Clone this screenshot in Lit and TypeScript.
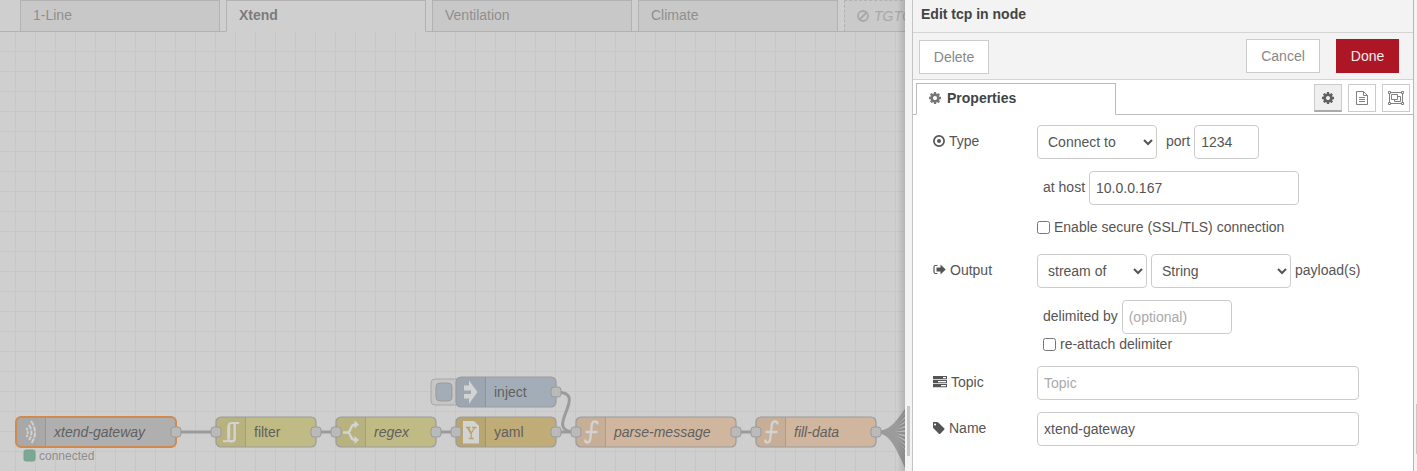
import { LitElement, html, svg, css } from "lit";
import { customElement } from "lit/decorators.js";

const COG =
  "M1152 896q0-106-75-181t-181-75-181 75-75 181 75 181 181 75 181-75 75-181zm512-109v222q0 12-8 23t-20 13l-185 28q-19 54-39 91 35 50 107 138 10 12 10 25t-9 23q-27 37-99 108t-94 71q-12 0-26-9l-138-108q-44 23-91 38-16 136-29 186-7 28-36 28h-222q-14 0-24.5-8.5t-11.5-21.5l-28-184q-49-16-90-37l-141 107q-10 9-25 9-14 0-25-11-126-114-165-168-7-10-7-23 0-12 8-23 15-21 51-66.5t54-70.5q-27-50-41-99l-183-27q-13-2-21-12.5t-8-23.5v-222q0-12 8-23t19-13l186-28q14-46 39-92-40-57-107-138-10-12-10-24 0-10 9-23 26-36 98.5-107.5t94.5-71.5q13 0 26 10l138 107q44-23 91-38 16-136 29-186 7-28 36-28h222q14 0 24.5 8.5t11.5 21.5l28 184q49 16 90 37l142-107q9-9 24-9 13 0 25 10 129 119 165 170 7 8 7 22 0 12-8 23-15 21-51 66.5t-54 70.5q26 50 41 98l183 28q13 2 21 12.5t8 23.5z";
const TAG =
  "M384 448q0-53-37.5-90.5t-90.5-37.5-90.5 37.5-37.5 90.5 37.5 90.5 90.5 37.5 90.5-37.5 37.5-90.5zm1067 576q0 53-37 90l-491 492q-39 37-91 37-53 0-90-37l-715-716q-38-37-64.5-101t-26.5-117v-416q0-52 38-90t90-38h416q53 0 117 26.5t102 64.5l715 714q37 39 37 91z";

const cog = html`<svg width="12" height="12" viewBox="128 128 1536 1536"><path fill="currentColor" d=${COG} /></svg>`;

interface FlowNode {
  x: number;
  y: number;
  w: number;
  label: string;
  fill: string;
  icon: string;
  italic?: boolean;
  selected?: boolean;
  input?: boolean;
}

const NODES: FlowNode[] = [
  { x: 16, y: 417, w: 160, label: "xtend-gateway", fill: "#afafaf", icon: "tcp", italic: true, selected: true },
  { x: 216, y: 417, w: 100, label: "filter", fill: "#c0ba84", icon: "filter", input: true },
  { x: 336, y: 417, w: 100, label: "regex", fill: "#c0ba84", icon: "split", italic: true, input: true },
  { x: 456, y: 417, w: 100, label: "yaml", fill: "#bfac77", icon: "yaml", input: true },
  { x: 456, y: 377, w: 100, label: "inject", fill: "#a3adb8", icon: "inject" },
  { x: 576, y: 417, w: 160, label: "parse-message", fill: "#d0b69e", icon: "fn", italic: true, input: true },
  { x: 756, y: 417, w: 120, label: "fill-data", fill: "#d0b69e", icon: "fn", italic: true, input: true },
];

const ICONS: Record<string, unknown> = {
  tcp: svg`<g fill="none" stroke="#d3d3d3" stroke-width="1.9">
    <path d="M10.500 11q2.500 4.500 0 9" stroke-dasharray="2.500 1"/>
    <path d="M13 8q5 7.500 0 15" stroke-dasharray="4.800 1.200"/>
    <path d="M15 4q8 11.500 0 23" stroke-dasharray="5 1.200"/></g>`,
  filter: svg`<g fill="none" stroke="#d3d3d3"><path d="M7 24.200h3q2.700 0 2.700-2.700V9q0-3 3-3h7.500" stroke-width="2"/><path d="M12.700 8.500v13" stroke-width="3"/><path d="M12.500 24.200h3.500q2.700 0 2.700-2.700V6" stroke-width="2.400"/></g>`,
  split: svg`<g fill="none" stroke="#d3d3d3" stroke-width="2.400"><path d="M7 15.500h6M12 15.500q2-1 3-4.500 1-3.500 5-3.500M12 15.500q2 1 3 4.500 1 3 5 3"/></g>
    <path fill="#d3d3d3" d="M18.500 3.500l4.500 4-4.500 4zM18.500 19l4.500 4-4.500 4z"/>`,
  yaml: svg`<path fill="#d3d3d3" d="M7 4h11l5 5v17.500H7z"/>
    <path d="M10 10.500h4.500M16 10.500h4.500M15.200 16v5.500M12.800 21.500h5M15.300 16l3.500-5.500" fill="none" stroke="#bba56a" stroke-width="1.300"/>
    <path d="M11.800 10.500l3.400 6" stroke="#bba56a" stroke-width="2"/>`,
  inject: svg`<path fill="#d3d3d3" d="M8 8.500h5V3.500l8.500 11.500L13 27v-5.500H8V17h7v-3.500H8z"/>`,
  fn: svg`<path d="M21.500 6.500q-.5-2-2.500-2-2.800 0-3.200 3.500l-1.500 14q-.4 3.500-3.100 3.500-1.700 0-2-2M10.500 15h10" fill="none" stroke="#d3d3d3" stroke-width="2.300" stroke-linecap="round"/>`,
};

@customElement("flow-canvas")
class FlowCanvas extends LitElement {
  static styles = css`
    :host { display: block; flex: 1; min-height: 0; overflow: hidden; }
    svg { display: block; }
    text { font: 14px "Liberation Sans", Arial, sans-serif; fill: #616161; }
    .italic { font-style: italic; }
    .status { font-size: 12px; fill: #8d8d8d; }
    .wire { fill: none; stroke: #9b9b9b; stroke-width: 3; }
    .fan { fill: none; stroke: #9b9b9b; stroke-width: 2.3; }
    .port { fill: #bababa; stroke: #9b9b9b; }
  `;

  node(n: FlowNode) {
    return svg`<g transform="translate(${n.x} ${n.y})">
      <rect width=${n.w} height="30" rx="5" fill=${n.fill}/>
      <path d="M5 0h25v30H5q-5 0-5-5V5q0-5 5-5z" fill="#000" fill-opacity=".04"/>
      <path d="M29.500 0v30" stroke="#000" stroke-opacity=".1"/>
      ${ICONS[n.icon]}
      <rect width=${n.w} height="30" rx="5" fill="none" stroke=${n.selected ? "#d08a50" : "#9b9b9b"} stroke-width=${n.selected ? 2 : 1.2}/>
      <text class=${n.italic ? "italic" : ""} x="38" y="20">${n.label}</text>
      ${n.input ? svg`<rect class="port" x="-5" y="10" width="10" height="10" rx="3"/>` : ""}
      <rect class="port" x=${n.w - 5} y="10" width="10" height="10" rx="3"/>
    </g>`;
  }

  render() {
    const fan = Array.from({ length: 13 }, (_, i) => 404 + i * 6);
    return html`<svg width="905" height="439" viewBox="0 32 905 439">
      <defs><pattern id="grid" x="15" y="31" width="20" height="20" patternUnits="userSpaceOnUse">
        <path d="M.5 0V20M0 .5H20" stroke="#c7c7c7"/></pattern></defs>
      <rect y="32" width="905" height="439" fill="#cfcfcf"/>
      <rect y="32" width="905" height="439" fill="url(#grid)"/>
      ${fan.map((y) => svg`<path class="fan" d="M878 432C893 432 900 ${432 + (y - 432) * 0.55} 910 ${y}"/>`)}
      <path class="wire" d="M176 432H216M316 432H336M436 432H456M556 432H576M736 432H756"/>
      <path class="wire" d="M556 392C592 392 540 432 576 432"/>
      <rect x="431" y="379" width="32" height="26" rx="4" fill="#c6c6c6" stroke="#a8a8a8"/>
      <rect x="436" y="383" width="16" height="18" rx="4" fill="#a3adb8" stroke="#9b9b9b"/>
      ${NODES.map((n) => this.node(n))}
      <rect x="24" y="450" width="11" height="11" rx="2" fill="#7ba894" stroke="#7ba08f"/>
      <text class="status" x="39" y="460">connected</text>
    </svg>`;
  }
}

@customElement("workspace-tabs")
class WorkspaceTabs extends LitElement {
  static styles = css`
    :host { display: flex; gap: 6px; height: 32px; flex: none; overflow: hidden; padding-left: 20px;
      box-sizing: border-box; background: linear-gradient(#b2b2b2, #b2b2b2) 0 31px / 100% 1px no-repeat #cfcfcf; }
    .tab { box-sizing: border-box; flex: 0 0 200px; height: 32px; padding-left: 12px; border: 1px solid #b2b2b2;
      background: #c8c8c8; color: #8f8f8f; font-size: 14px; line-height: 29px; }
    .active { background: #cfcfcf; border-bottom-color: #cfcfcf; color: #7c7c7c; font-weight: bold; }
    .disabled { display: flex; align-items: center; gap: 5px; border-style: dashed; border-bottom-style: solid;
      color: #a8a8a8; font-style: italic; background: #cacaca; }
  `;
  render() {
    return html`<div class="tab">1-Line</div>
      <div class="tab active">Xtend</div>
      <div class="tab">Ventilation</div>
      <div class="tab">Climate</div>
      <div class="tab disabled">
        <svg width="12" height="12" viewBox="0 0 12 12" fill="none" stroke="currentColor" stroke-width="1.800"><circle cx="6" cy="6" r="5"/><path d="M2.500 9.500l7-7"/></svg>
        TGTG
      </div>`;
  }
}

@customElement("edit-tray")
class EditTray extends LitElement {
  static styles = css`
    :host { display: flex; flex-direction: column; box-sizing: border-box; width: 502px; flex: none;
      border-left: 1px solid #c4c4c4; border-right: 1px solid #b8b8b8; background: #fff; color: #555; font-size: 14px; }
    svg { display: block; flex: none; }
    .header { box-sizing: border-box; height: 33px; padding-left: 8px; line-height: 28px; font-weight: bold;
      color: #444; background: #f3f3f3; border-bottom: 1px solid #d4d4d4; }
    .toolbar { box-sizing: border-box; height: 47px; display: flex; align-items: flex-start; padding: 6px 14px 0 6px;
      background: #f3f3f3; border-bottom: 1px solid #d4d4d4; }
    .btn { box-sizing: border-box; height: 34px; border: 1px solid #ccc; background: #fff; color: #888;
      line-height: 32px; text-align: center; }
    .delete { width: 70px; margin: 1px auto 0 0; }
    .cancel { width: 74px; margin-right: 16px; }
    .done { width: 63px; background: #ad1625; border-color: #ad1625; color: #eee; }
    .tabs { box-sizing: border-box; height: 35px; display: flex; padding: 3px 3px 0;
      background: linear-gradient(#bbb, #bbb) 0 34px / 100% 1px no-repeat #fff; }
    .tab { box-sizing: border-box; width: 200px; height: 32px; display: flex; align-items: center; gap: 6px;
      padding: 0 0 2px 12px; margin-right: auto; border: 1px solid #bbb; border-bottom-color: #fff;
      background: #fff; color: #444; font-weight: bold; }
    .tab svg { color: #777; }
    .tool { box-sizing: border-box; width: 28px; height: 28px; margin: 1px 0 0 6px; border: 1px solid #ccc;
      display: grid; place-items: center; color: #808080; }
    .on { background: #efefef; border-bottom: 2px solid #aaa; color: #606060; }
    .form { padding: 10px 0 0 20px; display: flex; flex-direction: column; }
    .row { display: flex; align-items: center; height: 34px; margin-bottom: 12px; }
    .label { display: flex; align-items: center; gap: 4px; width: 104px; height: 16px; padding-bottom: 2px; flex: none; }
    .text { padding-bottom: 2px; line-height: 16px; white-space: nowrap; }
    .port-text { margin: 0 4px 0 9px; }
    .lead { margin: 0 4px 0 110px; }
    .after { margin-left: 4px; }
    .check { display: flex; align-items: center; height: 17px; margin-left: 104px; }
    .check input { width: 13px; height: 13px; margin: 0 4px 0 0; }
    .secure { margin: 2px 0 18px 104px; }
    .reattach { margin: -10px 0 13px 110px; }
    .box { box-sizing: border-box; height: 34px; border: 1px solid #ccc; border-radius: 4px; background: #fff;
      color: #555; font: 14px "Liberation Sans", Arial, sans-serif; padding: 0 6px 1px; margin: 0; }
    .box::placeholder { color: #aaa; opacity: 1; }
    .w65 { width: 65px; } .w110 { width: 110px; } .w120 { width: 120px; } .w140 { width: 140px; }
    .w210 { width: 210px; } .w322 { width: 322px; }
    .second { margin-left: 4px; }
  `;
  render() {
    return html`
      <div class="header">Edit tcp in node</div>
      <div class="toolbar">
        <div class="btn delete">Delete</div>
        <div class="btn cancel">Cancel</div>
        <div class="btn done">Done</div>
      </div>
      <div class="tabs">
        <div class="tab">${cog}Properties</div>
        <div class="tool on">${cog}</div>
        <div class="tool">
          <svg width="12" height="14" viewBox="0 0 12 14" fill="none" stroke="currentColor"><path d="M.5.5h7l4 4v9H.500zM7.500.500v4h4M3 6.500h6M3 8.500h6M3 10.500h6"/></svg>
        </div>
        <div class="tool">
          <svg width="16" height="14" viewBox="0 0 16 14" fill="none" stroke="currentColor"><path d="M2.500 1.500h11M2.500 12.500h11M1.500 2.500v9M14.500 2.500v9M3.500 3.500h6v5h-6zM9.500 5.500h3v5h-6v-2"/><path fill="#fff" d="M.5.500h2v2h-2zM13.500.500h2v2h-2zM.5 11.500h2v2h-2zM13.500 11.500h2v2h-2z"/></svg>
        </div>
      </div>
      <div class="form">
        <div class="row">
          <div class="label">
            <svg width="12" height="12" viewBox="0 0 12 12"><circle cx="6" cy="6" r="5.100" fill="none" stroke="currentColor" stroke-width="1.700"/><circle cx="6" cy="6" r="2" fill="currentColor"/></svg>Type
          </div>
          <select class="box w120"><option>Connect to</option></select>
          <span class="text port-text">port</span>
          <input class="box w65" .value=${"1234"} />
        </div>
        <div class="row">
          <span class="text lead">at host</span>
          <input class="box w210" .value=${"10.0.0.167"} />
        </div>
        <div class="check secure"><input type="checkbox" /><span class="text">Enable secure (SSL/TLS) connection</span></div>
        <div class="row">
          <div class="label">
            <svg width="13" height="12" viewBox="0 0 13 12"><path d="M4.500 1.500H2.500q-1.500 0-1.500 1.500v5q0 1.500 1.500 1.500H4.500" fill="none" stroke="currentColor" stroke-width="1.200"/><path fill="currentColor" d="M3.500 3.500h4V.500l5.200 5-5.200 5V7.500h-4z"/></svg>Output
          </div>
          <select class="box w110"><option>stream of</option></select>
          <select class="box w140 second"><option>String</option></select>
          <span class="text after">payload(s)</span>
        </div>
        <div class="row">
          <span class="text lead">delimited by</span>
          <input class="box w110" placeholder="(optional)" />
        </div>
        <div class="check reattach"><input type="checkbox" /><span class="text">re-attach delimiter</span></div>
        <div class="row">
          <div class="label">
            <svg width="14" height="12" viewBox="0 0 14 12"><path fill="currentColor" fill-rule="evenodd" d="M0 0h14v3.300H0zM10 1.100h3v1.100h-3zM0 4h14v3.300H0zM5 5.100h8v1.100H5zM0 8h14v3.300H0zM8 9.100h5v1.100H8z"/></svg>Topic
          </div>
          <input class="box w322" placeholder="Topic" />
        </div>
        <div class="row">
          <div class="label">
            <svg width="12" height="12" viewBox="0 128 1516 1516"><path fill="currentColor" d=${TAG} /></svg>Name
          </div>
          <input class="box w322" .value=${"xtend-gateway"} />
        </div>
      </div>`;
  }
}

@customElement("drag-bar")
class DragBar extends LitElement {
  static styles = css`
    :host { display: flex; align-items: flex-start; box-sizing: border-box; background: #f3f3f3; overflow: hidden; flex: none; }
    .grip { width: 3px; height: 50px; background: #c9c9c9; flex: none; }
  `;
  render() {
    return html`<div class="grip"></div>`;
  }
}

@customElement("app-root")
class AppRoot extends LitElement {
  static styles = css`
    :host { display: flex; width: 1417px; height: 471px; overflow: hidden;
      font-family: "Liberation Sans", Arial, sans-serif; background: #fff; }
    .workspace { position: relative; width: 905px; flex: none; display: flex; flex-direction: column; overflow: hidden; }
    .shadow { position: absolute; inset: 0 0 0 auto; width: 8px; background: linear-gradient(to right, rgba(0,0,0,0), rgba(0,0,0,.13)); }
    .left { width: 7px; padding: 406px 0 0 2px; }
    .right { width: 3px; padding: 404px 0 0 2px; }
  `;
  render() {
    return html`
      <div class="workspace">
        <workspace-tabs></workspace-tabs>
        <flow-canvas></flow-canvas>
        <div class="shadow"></div>
      </div>
      <drag-bar class="left"></drag-bar>
      <edit-tray></edit-tray>
      <drag-bar class="right"></drag-bar>`;
  }
}
